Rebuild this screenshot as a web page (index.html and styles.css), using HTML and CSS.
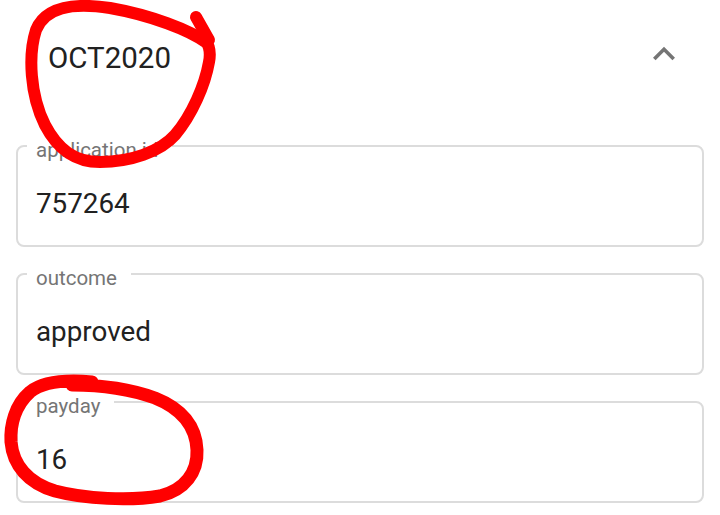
FILE: index.html
```html
<!DOCTYPE html>
<html>
<head>
<title>OCT2020</title>
<link rel="stylesheet" href="styles.css">
</head>
<body>
    <div class="panel">
        <div class="summary">
            <h1 class="summary-title">OCT2020</h1>
            <svg class="expand-icon" viewBox="0 0 24 24" width="44" height="44">
                <path d="M12 8l-6 6 1.41 1.41L12 10.83l4.59 4.58L18 14z"/>
            </svg>
        </div>
        <div class="details">
            <div class="field">
                <span class="field-label">application id</span>
                <div class="field-value">757264</div>
            </div>
            <div class="field">
                <span class="field-label">outcome</span>
                <div class="field-value">approved</div>
            </div>
            <div class="field">
                <span class="field-label">payday</span>
                <div class="field-value">16</div>
            </div>
        </div>
    </div>

    <!-- hand-drawn marks on top of the screenshot -->
    <svg class="marks" viewBox="0 0 720 515" width="720" height="515">
        <path d="M196,17 L209,40"/>
        <path d="M207,43 C190,30 150,15 110,8 C70,2 45,8 36,30 C28,55 30,95 45,125 C58,150 75,162 100,162 C130,162 160,152 175,135 C192,115 205,85 209,62 C211,52 209,45 205,40"/>
        <path class="mark-thick" d="M92,382 C70,380 45,380 30,392 C15,405 10,425 11,442 C13,465 28,483 55,491 C85,499 130,501 160,496 C185,490 198,472 197,450 C196,425 180,408 155,398 C130,389 100,385 72,385"/>
    </svg>
</body>
</html>
```

FILE: styles.css
```css
body {
    margin: 0;
    background-color: #ffffff;
    font-family: Roboto, "Noto Sans", sans-serif;
    color: #212121;
    width: 720px;
    height: 515px;
    overflow: hidden;
    position: relative;
}

.panel {
    background-color: #ffffff;
}

.summary {
    height: 145px;
    box-sizing: border-box;
    display: flex;
    justify-content: space-between;
    align-items: flex-start;
    padding: 32px 34px 0 48px;
}

.summary-title {
    margin: 8px 0 0 0;
    font-size: 29.5px;
    font-weight: 400;
    line-height: 36px;
    color: #212121;
}

.expand-icon {
    fill: #757575;
}

.details {
    display: flex;
    flex-direction: column;
    gap: 26px;
    padding: 0 16px;
}

.field {
    position: relative;
    height: 98px;
    box-sizing: content-box;
    border: 2px solid #dcdcdc;
    border-radius: 8px;
}

.field-label {
    position: absolute;
    top: -9px;
    left: 9px;
    padding: 0 14px 0 9px;
    background-color: #ffffff;
    font-size: 20.5px;
    line-height: 24px;
    color: #757575;
}

.field-value {
    padding: 41px 0 0 18px;
    font-size: 27.8px;
    line-height: 32px;
    color: #212121;
}

.marks {
    position: absolute;
    top: 0;
    left: 0;
    pointer-events: none;
    fill: none;
    stroke: #ff0000;
    stroke-width: 12;
    stroke-linecap: round;
    stroke-linejoin: round;
}

.marks .mark-thick {
    stroke-width: 13;
}
```
